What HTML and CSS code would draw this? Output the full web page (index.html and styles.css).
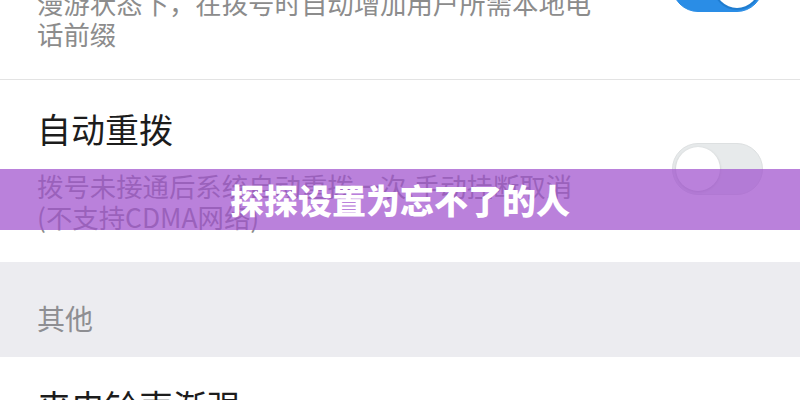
FILE: index.html
```html
<!DOCTYPE html>
<html lang="zh-CN">
<head>
    <meta charset="UTF-8">
    <meta name="viewport" content="width=device-width, initial-scale=1.0">
    <title>通话设置</title>
    <link rel="stylesheet" href="styles.css">
</head>
<body>
    <div class="settings">
        <div class="row">
            <div class="text">
                <div class="title">漫游自动加拨</div>
                <p class="desc">漫游状态下，在拨号时自动增加用户所需本地电话前缀</p>
            </div>
            <span class="switch on"><span class="knob"></span></span>
        </div>

        <div class="row last">
            <div class="text">
                <div class="title">自动重拨</div>
                <p class="desc">拨号未接通后系统自动重拨一次,手动挂断取消<br>(不支持CDMA网络)</p>
            </div>
            <span class="switch"><span class="knob"></span></span>
        </div>

        <div class="section">其他</div>

        <div class="row">
            <div class="text">
                <div class="title">来电铃声渐强</div>
                <p class="desc">来电时铃声音量由低到高逐渐增大</p>
            </div>
            <span class="switch"><span class="knob"></span></span>
        </div>
    </div>

    <!-- caption strip over the list -->
    <div class="banner">探探设置为忘不了的人</div>
</body>
</html>
```

FILE: styles.css
```css
body {
    margin: 0;
    background: #fff;
    font-family: "Noto Sans CJK SC", "Noto Sans", sans-serif;
    color: #1c1c1c;
    overflow: hidden;
}
.settings {
    margin-top: -103px;
}
.row {
    display: flex;
    align-items: center;
    justify-content: space-between;
    padding: 26px 37px 30px 37px;
    border-bottom: 1px solid #e3e3e3;
}
.row.last {
    border-bottom: none;
}
.title {
    font-size: 34px;
    line-height: 46px;
}
.desc {
    margin: 18px 0 0 0;
    width: 570px;
    font-size: 26.4px;
    line-height: 31px;
    color: #8c8c8c;
}
.section {
    height: 95px;
    box-sizing: border-box;
    padding: 36px 37px 0 37px;
    background: #ececf0;
    font-size: 28px;
    line-height: 40px;
    color: #8e8e92;
}

/* toggle switch */
.switch {
    flex: none;
    position: relative;
    width: 91px;
    height: 52px;
    box-sizing: border-box;
    border-radius: 26px;
    background: #e7eaeb;
    border: 1px solid #dde0e1;
}
.switch .knob {
    position: absolute;
    top: 3px;
    left: 3px;
    width: 44px;
    height: 44px;
    border-radius: 50%;
    background: #fff;
    box-shadow: 0 1px 3px rgba(0,0,0,0.18);
}
.switch.on {
    background: #2a8de6;
    border-color: #2a8de6;
}
.switch.on .knob {
    left: auto;
    right: 3px;
    box-shadow: 0 0 0 2px #1f7ccf;
}

.banner {
    position: absolute;
    left: 0;
    right: 0;
    top: 169px;
    height: 61px;
    background: rgba(160, 80, 205, 0.72);
    color: #fff;
    font-size: 34px;
    font-weight: 900;
    line-height: 61px;
    text-align: center;
}
```
